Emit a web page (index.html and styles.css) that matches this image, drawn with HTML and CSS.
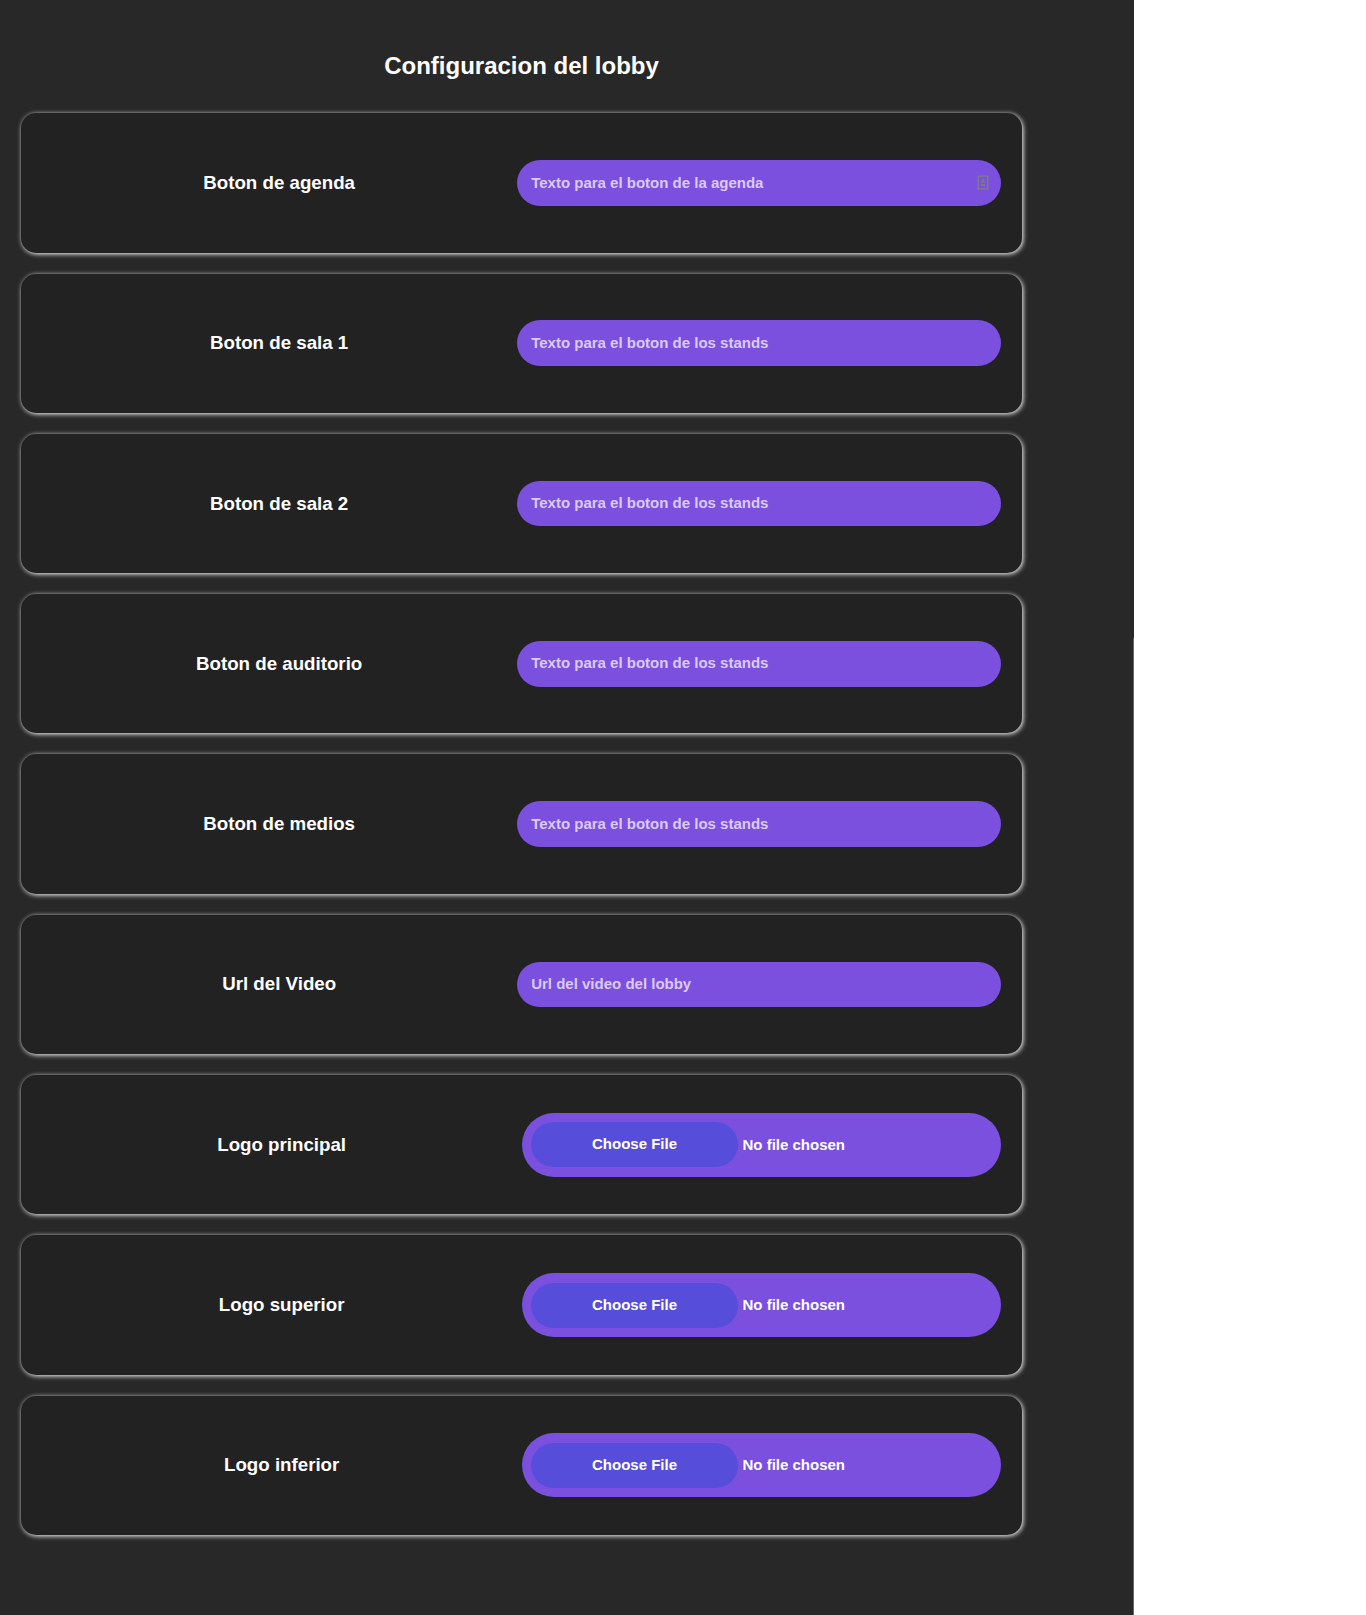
FILE: index.html
```html
<!DOCTYPE html>
<html lang="es">
<head>
<meta charset="utf-8">
<title>Configuracion del lobby</title>
<link rel="stylesheet" href="styles.css">
</head>
<body>
<main class="panel">
  <form class="settings">
    <h1 class="title">Configuracion del lobby</h1>
    <section class="card"><h3 class="label">Boton de agenda</h3><div class="field"><span class="hint">Texto para el boton de la agenda</span><svg class="contact" viewBox="0 0 12 15" width="12" height="15"><path d="M1.200 1.200h9.600v12.600H1.200z" fill="none" stroke="#808080" stroke-width="1.200"/><path d="M5.200 3.500h1.600v2h1.100v2.200H4.100V5.500h1.100zM4 9h4v2H4z" fill="#808080" opacity=".8"/></svg></div></section>
    <section class="card"><h3 class="label">Boton de sala 1</h3><div class="field"><span class="hint">Texto para el boton de los stands</span></div></section>
    <section class="card"><h3 class="label">Boton de sala 2</h3><div class="field"><span class="hint">Texto para el boton de los stands</span></div></section>
    <section class="card"><h3 class="label">Boton de auditorio</h3><div class="field"><span class="hint">Texto para el boton de los stands</span></div></section>
    <section class="card"><h3 class="label">Boton de medios</h3><div class="field"><span class="hint">Texto para el boton de los stands</span></div></section>
    <section class="card"><h3 class="label">Url del Video</h3><div class="field"><span class="hint">Url del video del lobby</span></div></section>
    <section class="card"><h3 class="label">Logo principal</h3><div class="upload"><span class="choose">Choose File</span><span class="status">No file chosen</span></div></section>
    <section class="card"><h3 class="label">Logo superior</h3><div class="upload"><span class="choose">Choose File</span><span class="status">No file chosen</span></div></section>
    <section class="card"><h3 class="label">Logo inferior</h3><div class="upload"><span class="choose">Choose File</span><span class="status">No file chosen</span></div></section>
  </form>
  <div class="edge"></div>
</main>
</body>
</html>
```
FILE: styles.css
```css
* { box-sizing: border-box; }
body { margin: 0; background: #fff; font-family: "Liberation Sans", Arial, sans-serif; }
.panel { display: flex; justify-content: space-between; width: 1134px; height: 1615px; background: #282828; color: #fff; }
.settings { display: flex; flex-direction: column; gap: 21px; width: 1022px; padding: 52px 0 0 21px; }
.title { flex: none; margin: 0 0 12.3px; height: 28px; font-size: 24px; line-height: 28px; text-align: center; }
.card { display: flex; flex: none; align-items: center; height: 139.3px; padding: 0 21px 0 20.3px; border-radius: 15px; background: #222; box-shadow: 1px 1px 5px #fff; }
.label { flex: 1; margin: 0; font-size: 18.72px; text-align: center; }
.field, .upload { display: flex; align-items: center; background: #7b50df; font-size: 15px; font-weight: bold; }
.field { justify-content: space-between; width: 484px; height: 45.7px; padding: 0 12px 0 14.2px; border-radius: 23px; }
.hint { padding-bottom: 1.8px; color: #dccbf7; }
.upload { gap: 4.5px; width: 479px; height: 64px; padding: 0 9px; border-radius: 32px; }
.choose { width: 207px; height: 45px; border-radius: 23px; background: #564dda; line-height: 43px; text-align: center; }
.status { padding-bottom: 1.4px; }
.edge { width: 1px; margin-top: 638px; background: #666; }
```
